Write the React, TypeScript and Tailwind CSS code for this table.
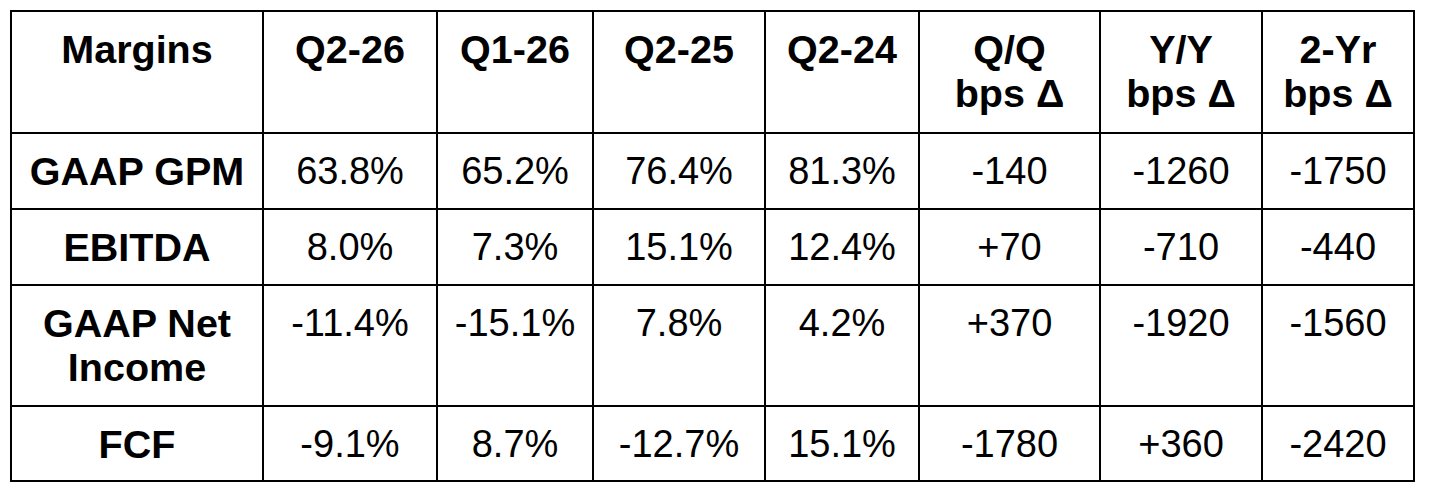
const header = ["Margins", "Q2-26", "Q1-26", "Q2-25", "Q2-24", "Q/Q\nbps Δ", "Y/Y\nbps Δ", "2-Yr\nbps Δ"];

const rows: { label: string; values: string[]; h: string }[] = [
  { label: "GAAP GPM", values: ["63.8%", "65.2%", "76.4%", "81.3%", "-140", "-1260", "-1750"], h: "h-[74px]" },
  { label: "EBITDA", values: ["8.0%", "7.3%", "15.1%", "12.4%", "+70", "-710", "-440"], h: "h-[74px]" },
  { label: "GAAP Net\nIncome", values: ["-11.4%", "-15.1%", "7.8%", "4.2%", "+370", "-1920", "-1560"], h: "h-[119px]" },
  { label: "FCF", values: ["-9.1%", "8.7%", "-12.7%", "15.1%", "-1780", "+360", "-2420"], h: "h-[73px]" },
];

export default function App() {
  return (
    <div className="w-[1430px] h-[492px] bg-white pt-[10px] pl-[10px] font-['Liberation_Sans',Arial,sans-serif] text-black">
      <div className="grid w-fit grid-cols-[250px_172px_154px_170px_152px_179px_160px_150px] gap-[2px] bg-black p-[2px]">
        {header.map((h) => (
          <div key={h} className="h-[120px] bg-white pt-[15px] text-center text-[39.5px] font-bold leading-[44px] whitespace-pre-line">
            {h}
          </div>
        ))}
        {rows.map((r) => (
          <Row key={r.label} label={r.label} values={r.values} h={r.h} />
        ))}
      </div>
    </div>
  );
}

function Row({ label, values, h }: { label: string; values: string[]; h: string }) {
  return (
    <>
      <div className={`${h} bg-white pt-[15px] text-center text-[39.5px] font-bold leading-[44px] whitespace-pre-line`}>
        {label}
      </div>
      {values.map((v, i) => (
        <div key={i} className={`${h} bg-white pt-[15px] text-center text-[38px] leading-[44px]`}>
          {v}
        </div>
      ))}
    </>
  );
}
